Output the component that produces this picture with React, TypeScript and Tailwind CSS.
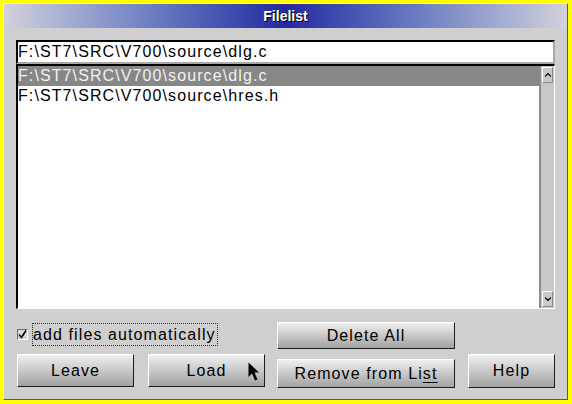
import React from 'react';

const font = "font-['Liberation_Sans',Arial,sans-serif] tracking-[1.1px]";

const Btn: React.FC<{ className?: string; children: React.ReactNode }> = ({ className = '', children }) => (
  <div
    className={`relative flex items-center justify-center border border-t-white border-l-white border-b-[#1c1c1c] border-r-[#1c1c1c] bg-gradient-to-b from-[#f0f0f0] to-[#a2a2a2] text-[16px] text-black ${font} ${className}`}
  >
    {children}
  </div>
);

const Arrow: React.FC<{ up?: boolean }> = ({ up }) => (
  <div className="m-[1px] flex h-[16px] items-center justify-center border border-t-white border-l-white border-b-[#8a8a8a] border-r-[#8a8a8a] bg-[#cacaca]">
    <svg width="6" height="4" viewBox="0 0 6 4">
      {up ? (
        <path d="M0 3.5 L3 0.5 L6 3.5" fill="none" stroke="#000" strokeWidth="1.2" />
      ) : (
        <path d="M0 0.5 L3 3.5 L6 0.5" fill="none" stroke="#000" strokeWidth="1.2" />
      )}
    </svg>
  </div>
);

export default function App() {
  return (
    <div className="h-[404px] w-[572px] bg-[#ffff00] pt-[3px] pl-[3px] pr-[4px] pb-[4px]">
      <div className="flex h-full flex-col border border-t-white border-l-white border-b-[#5a5a5a] border-r-[#5a5a5a] bg-[#cfcfcf]">
        {/* Title bar */}
        <div className="flex h-[24px] items-center justify-center bg-gradient-to-r from-[#d2d2dc] via-[#2626a0] to-[#d2d2dc]">
          <span className="font-['Liberation_Sans',Arial,sans-serif] text-[14px] font-bold text-white [text-shadow:1px_1px_0_#000]">
            Filelist
          </span>
        </div>

        {/* Body */}
        <div className="flex flex-col px-[12px] pt-[12px]">
          {/* Edit field */}
          <div className={`flex h-[24px] items-center border-2 border-t-black border-l-black border-b-[#a8a8a8] border-r-[#a8a8a8] bg-white text-[16px] text-black ${font}`}>
            F:\ST7\SRC\V700\source\dlg.c
          </div>

          {/* List box */}
          <div className="flex h-[245px] border-t-2 border-l-2 border-b border-r border-t-black border-l-black border-b-white border-r-white bg-white">
            <div className={`flex-1 text-[16px] leading-[20px] ${font}`}>
              <div className="h-[20px] bg-[#878787] text-[#f2f2f2]">F:\ST7\SRC\V700\source\dlg.c</div>
              <div className="h-[20px] text-black">F:\ST7\SRC\V700\source\hres.h</div>
            </div>
            <div className="flex w-[15px] flex-col justify-between border-l-2 border-l-[#8c8c8c] bg-[#c8c8c8]">
              <Arrow up />
              <Arrow />
            </div>
          </div>

          {/* Bottom controls */}
          <div className="flex items-start">
            <div className="ml-[1px] flex w-[248px] flex-col">
              <div className="mt-[14px] flex h-[23px] items-center">
                <div className="flex h-[11px] w-[11px] items-center justify-center border border-t-[#6a6a6a] border-l-[#6a6a6a] border-b-white border-r-white bg-[#d8d8d8]">
                  <svg width="9" height="9" viewBox="0 0 9 9">
                    <path d="M1 4.5 L3.5 7.5 L8 0.5" fill="none" stroke="#000" strokeWidth="1.6" />
                  </svg>
                </div>
                <div className={`ml-[4px] flex h-[23px] items-center border border-dotted border-[#303030] pr-[1px] text-[16px] text-black ${font}`}>
                  add files automatically
                </div>
              </div>
              <div className="mt-[8px] flex gap-[14px]">
                <Btn className="h-[33px] w-[117px]">Leave</Btn>
                <Btn className="h-[33px] w-[117px]">
                  Load
                  <svg className="absolute left-[99px] top-[7px]" width="12" height="19" viewBox="0 0 12 19">
                    <path d="M0.5 0.5 L0.5 15 L4 11.5 L7 18.5 L9.5 17.5 L6.5 10.5 L11 10.5 Z" fill="#000" />
                  </svg>
                </Btn>
              </div>
            </div>
            <div className="ml-[12px] flex w-[178px] flex-col">
              <Btn className="mt-[13px] h-[27px]">Delete All</Btn>
              <Btn className="mt-[10px] h-[29px]">
                <span>
                  Remove from Li<span className="underline underline-offset-[3px]">st</span>
                </span>
              </Btn>
            </div>
            <Btn className="ml-[13px] mt-[45px] h-[34px] w-[87px]">Help</Btn>
          </div>
        </div>
      </div>
    </div>
  );
}
